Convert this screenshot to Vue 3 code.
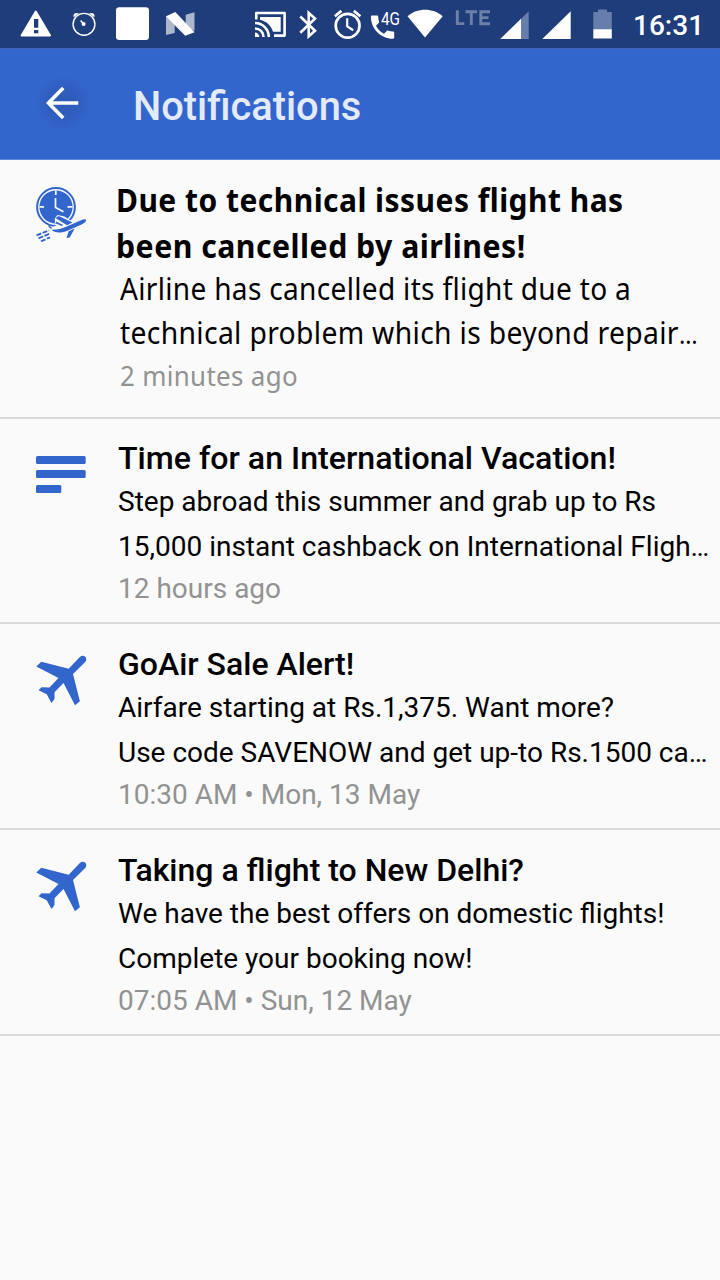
<script setup>
const notifications = [
  {
    id: 1, icon: 'delay', kind: 'alert',
    title: [['Due to technical issues flight has', 508], ['been cancelled by airlines!', 410]],
    body: [['Airline has cancelled its flight due to a', 511], ['technical problem which is beyond repair', 578, '…']],
    time: ['2 minutes ago', 178],
  },
  {
    id: 2, icon: 'lines', kind: 'offer',
    title: [['Time for an International Vacation!', 498]],
    body: [['Step abroad this summer and grab up to Rs'], ['15,000 instant cashback on International Fligh…']],
    time: ['12 hours ago'],
  },
  {
    id: 3, icon: 'plane', kind: 'offer',
    title: [['GoAir Sale Alert!']],
    body: [['Airfare starting at Rs.1,375. Want more?'], ['Use code SAVENOW and get up-to Rs.1500 ca…']],
    time: ['10:30 AM • Mon, 13 May'],
  },
  {
    id: 4, icon: 'plane', kind: 'offer',
    title: [['Taking a flight to New Delhi?']],
    body: [['We have the best offers on domestic flights!'], ['Complete your booking now!']],
    time: ['07:05 AM • Sun, 12 May'],
  },
]

// Scales a line of text horizontally to its given width.
const vFit = {
  mounted(el, { value }) {
    if (value) el.style.transform = `scaleX(${value / el.offsetWidth})`
  },
}
</script>

<template>
  <div class="screen">
    <header class="status">
      <svg viewBox="0 0 60 48">
        <path d="M35.8 11.5 50 35.5H21.6Z" fill="#fff" stroke="#fff" stroke-width="2" stroke-linejoin="round" />
        <path d="M34 19h4.3v8.7H34zM34 30h4.3v3.2H34z" fill="#1f3d7a" />
      </svg>
      <svg viewBox="60 0 48 48">
        <circle cx="84" cy="24.3" r="10.9" fill="none" stroke="#fff" stroke-width="1.4" />
        <path d="M73.6 17.2c-.8-3.4 1.8-5 5.4-3.6zM94.4 17.2c.8-3.4-1.8-5-5.4-3.6z" fill="#fff" />
        <circle cx="83.6" cy="24" r="2" fill="#fff" />
        <path d="M83.5 24l-2.8-3.5" stroke="#fff" stroke-width="1.6" />
      </svg>
      <svg viewBox="108 0 49 48"><rect x="116" y="7.3" width="33" height="32.7" rx="3.2" fill="#fff" /></svg>
      <svg viewBox="157 0 83 48">
        <path d="M166 16l8.700 5v12l-8.700 2zM185.700 14.700l8.800-2.400V31l-8.800-5z" fill="#fff" opacity=".63" />
        <path d="M166 16.200l9.300-4.200 19.200 20.300-9.300 3.500z" fill="#fff" />
      </svg>
      <svg viewBox="240 0 52 48" fill="none" stroke="#fff">
        <path d="M256.3 19.5V13H284.6V35.6H274" stroke-width="2.6" stroke-linejoin="round" />
        <path d="M260 17h20.7v14.8h-7.700c-1.700-6-6.500-10.500-13-12z" fill="#fff" stroke="none" />
        <path d="M255 23.1a13.8 13.8 0 0 1 13.8 13.8M255 28.4a8.5 8.5 0 0 1 8.5 8.5" stroke-width="2.5" />
        <path d="M255 32.6a4.4 4.4 0 0 1 4.4 4.4H255z" fill="#fff" stroke="none" />
      </svg>
      <svg viewBox="292 0 32 48"><path d="M300.3 16.5 315 30.8 308.7 36.4V13L315 18.6 300.3 32.8" fill="none" stroke="#fff" stroke-width="2.6" /></svg>
      <svg viewBox="324 0 43 48" fill="none" stroke="#fff">
        <circle cx="347.6" cy="25.7" r="11.9" stroke-width="2.7" />
        <path d="M334.8 16.3l6.6-5.4M360.4 16.3l-6.6-5.4" stroke-width="2.7" />
        <path d="M347.2 18.3v8.2l6 3.7" stroke-width="2.2" />
      </svg>
      <svg viewBox="367 0 37 48">
        <path d="M372.2 15.500h4.700c.8 0 1.300.5 1.300 1.300 0 1.700.3 3.300.8 4.800.1.500 0 1-.3 1.300l-2.700 2.800c1.800 3.500 4.600 6.200 8 8l2.700-2.700c.4-.4.900-.5 1.400-.3 1.500.5 3.100.8 4.800.8.800 0 1.300.6 1.300 1.300v4.700c0 .8-.5 1.300-1.300 1.300-12.100 0-22-9.800-22-22 0-.8.500-1.300 1.300-1.300z" fill="#fff" />
        <text x="381" y="24.500" class="g4" textLength="19" lengthAdjust="spacingAndGlyphs">4G</text>
      </svg>
      <svg viewBox="404 0 46 48"><path d="M425 37.500 407.500 16.300C417 7.700 433 7.700 442.700 16.300Z" fill="#fff" /></svg>
      <svg viewBox="450 0 45 48"><path d="M457.300 10.300V23.600H464.300M465.500 11.800H477M471.300 11.800V25M490 11.800H480.800V23.700H490M480.800 17.600H488.500" fill="none" stroke="#6d80aa" stroke-width="2.900" /></svg>
      <svg viewBox="495 0 40 48"><path d="M528.700 11.300V39H500.300Z" fill="#677dab" /><path d="M521 18.800V39H500.300Z" fill="#fff" /></svg>
      <svg viewBox="535 0 45 48"><path d="M570.700 11.300V39H542.300Z" fill="#fff" /></svg>
      <svg viewBox="580 0 45 48"><path d="M593.300 12h4.700v-2.500h9V12h4.800v17.500h-18.500z" fill="#677dab" /><path d="M593.300 29.200h18.500v9.300h-18.500z" fill="#fff" /></svg>
      <span class="clock">16:31</span>
    </header>

    <div class="appbar">
      <span class="back">
        <svg width="34" height="34" viewBox="0 0 34 34"><path d="M32.300 17H3M17.200 2 2.500 17 17.200 32" fill="none" stroke="#fff" stroke-width="3.600" /></svg>
      </span>
      <h1>Notifications</h1>
    </div>

    <main>
      <article v-for="n in notifications" :key="n.id" :class="n.kind">
        <div :class="['icon', n.icon]">
          <svg v-if="n.icon === 'delay'" width="52" height="56" viewBox="35 186 52 56">
            <circle cx="56" cy="207" r="18.900" fill="none" stroke="#3366cc" stroke-width="2" />
            <circle cx="56" cy="207" r="16.600" fill="#3366cc" />
            <path d="M55.800 190.500v4.500M39.500 206.800h4.500M67.500 206.800h5M55.800 219v4M55.500 198v9.500l8 4.300" fill="none" stroke="#fafafa" stroke-width="1.700" />
            <path d="M48 229l8-3.500 2.500-2-4-4.500 3-4 7 1.500 8 5.500 11-5 3 5-5 5-14 6-12 5-9-6z" fill="#fafafa" />
            <path d="M51.500 229.800c6 .2 11-1.300 18-4.600l11.500-4.900c3-1.200 4.700-1.400 5.100-.2.300 1.300-1.200 2.800-4.500 4.400l-14.100 6.300c-5.500 2.200-12.500 2.800-16-1z" fill="#3366cc" />
            <path d="M55.500 218l3.300-2 13.700 6.500-5.500 2.800zM66.500 238l2.200-6.800 6-2.700-5 9z" fill="#3366cc" />
            <path d="M56 222.500l6.500 3M48.500 225.500l3 3" fill="none" stroke="#3366cc" stroke-width="1.500" />
            <path d="M36.500 235.300l12.500-4.800M38.500 238.300l11-4.600M41 241.300l9-4" fill="none" stroke="#3366cc" stroke-width="1.900" stroke-dasharray="5 1.500" />
          </svg>
          <svg v-else-if="n.icon === 'lines'" width="52" height="56" viewBox="35 445 52 56" fill="#3366cc">
            <rect x="36" y="456" width="49.700" height="8" rx="1.500" /><rect x="36" y="470" width="49.700" height="8" rx="1.500" /><rect x="36" y="485" width="25.300" height="8" rx="1.500" />
          </svg>
          <svg v-else width="52" height="56" viewBox="35 651 52 56">
            <path d="M68.700 668.700 79.800 657c4-3.500 8.600.9 5.400 5L73 674 79.900 701.300 75 705.300 63.500 683 54.500 692.300V699L51.500 703 46.700 694.300 38.500 690.300 41.500 687.200 49.500 687.500 58.500 678 36.300 666.500 41.300 661.800Z" fill="#3366cc" />
          </svg>
        </div>
        <div class="content">
          <h2><span v-for="l in n.title" :key="l[0]" v-fit="l[1]">{{ l[0] }}</span></h2>
          <p><span v-for="l in n.body" :key="l[0]" v-fit="l[1]">{{ l[0] }}<small v-if="l[2]">{{ l[2] }}</small></span></p>
          <time><span v-fit="n.time[1]">{{ n.time[0] }}</span></time>
        </div>
      </article>
    </main>
  </div>
</template>

<style>
body { background: #fafafa; }
</style>

<style scoped>
.screen { width: 720px; min-height: 1280px; background: #fafafa; font-family: Roboto, sans-serif; overflow: hidden; }
.status {
  display: grid; height: 48px; background: #1f3d7a; color: #fff;
  grid-template-columns: 60px 48px 49px 83px 52px 32px 43px 37px 46px 45px 40px 45px 45px 95px;
}
.status svg { width: 100%; height: 48px; display: block; overflow: visible; }
.g4 { font: 400 17.500px Roboto, sans-serif; fill: #fff; }
.clock { font-size: 28px; font-weight: 500; line-height: 51px; padding-left: 8px; }
.appbar { box-sizing: border-box; height: 112px; background: #3366cc; border-top: 1px solid #4a62b6; border-bottom: 1px solid #5f88d7; display: flex; align-items: center; }
.back { width: 62px; height: 62px; margin: 0 0 2px 32px; border-radius: 50%; display: grid; place-items: center; background: radial-gradient(circle, #2d5bb8 0%, #2f5ebf 35%, #3366cc 65%); }
h1 { margin: 5px 0 0 39px; font-size: 39.800px; font-weight: 500; line-height: 48px; color: #e3eafa; }
article { box-sizing: border-box; display: grid; grid-template-columns: 118px 1fr; border-bottom: 2px solid #dadada; height: 206px; }
article:nth-child(2) { height: 205px; }
.icon { padding: 26px 0 0 35px; }
.plane { padding-top: 27px; }
.content { padding-top: 19px; }
article:nth-child(2) .content { padding-top: 18px; }
h2, p { margin: 0; }
span { white-space: nowrap; }
.content span { display: block; width: max-content; transform-origin: 0 50%; }
h2 { font-size: 32px; font-weight: 500; line-height: 42px; color: #000; }
p { margin-top: 1px; font-size: 28px; line-height: 44.500px; color: #000; }
time { display: block; font-size: 28px; line-height: 39px; color: #929292; }
.alert { height: 259px; font-family: "Noto Sans", "Open Sans", sans-serif; letter-spacing: .35px; }
.alert .content { padding-top: 16.500px; }
.alert h2 { font-size: 31.500px; font-weight: 700; line-height: 46px; margin-left: -2px; letter-spacing: .5px; }
.alert p { font-size: 30px; line-height: 44px; margin: -2px 0 0 2px; }
.alert small { font-size: 25px; letter-spacing: 0; line-height: 1; }
.alert time { font-size: 27.500px; line-height: 37px; margin: 2px 0 0 1.500px; }
</style>
